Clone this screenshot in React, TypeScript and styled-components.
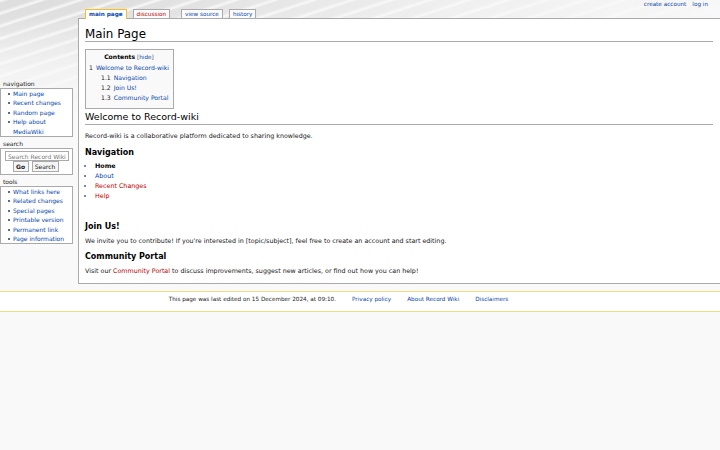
import React from "react";
import styled, { createGlobalStyle } from "styled-components";

const GlobalStyle = createGlobalStyle`
  html, body {
    margin: 0;
    padding: 0;
    background: #f9f9f9;
  }
  body {
    font-family: "DejaVu Sans", "Liberation Sans", sans-serif;
    color: #000;
  }
  a {
    text-decoration: none;
    color: #0645ad;
  }
`;

const Wrapper = styled.div`
  position: relative;
  isolation: isolate;
  width: 720px;
  min-height: 450px;
  overflow: hidden;

  /* the grey swoosh picture behind the top-left corner */
  &::before {
    content: "";
    position: absolute;
    left: 0;
    top: 0;
    width: 720px;
    height: 130px;
    z-index: -1;
    background-color: #e4e4e4;
    background-image: repeating-linear-gradient(
        -18deg,
        rgba(255, 255, 255, 0) 0px,
        rgba(255, 255, 255, 0) 7px,
        rgba(255, 255, 255, 0.75) 9px,
        rgba(255, 255, 255, 0) 12px
      ),
      linear-gradient(180deg, #dedede, #ececec);
    -webkit-mask-image: radial-gradient(ellipse 760px 115px at 0 0, #000 15%, rgba(0, 0, 0, 0.35) 60%, transparent 100%);
    mask-image: radial-gradient(ellipse 760px 115px at 0 0, #000 15%, rgba(0, 0, 0, 0.35) 60%, transparent 100%);
  }
`;

const PersonalBar = styled.ul`
  display: flex;
  justify-content: flex-end;
  gap: 6px;
  height: 9px;
  margin: 0;
  padding: 0 12px 0 0;
  list-style: none;
  font-size: 5.7px;
  line-height: 8px;
`;

const Layout = styled.div`
  display: grid;
  grid-template-columns: 78px 1fr;
  align-items: start;
`;

const Sidebar = styled.div`
  width: 73px;
  padding-top: 71px;
`;

const Portlet = styled.div`
  margin-bottom: 3px;
`;

const PortletLabel = styled.h3`
  margin: 0;
  padding: 0 3px;
  font-size: 6px;
  line-height: 8px;
  font-weight: normal;
  color: #222;
`;

const PortletBody = styled.div`
  background: #fff;
  border: 1px solid #aaa;
  padding: 0 2px 0 0;
`;

const PortletList = styled.ul`
  margin: 0;
  padding: 0 0 0 12px;
  list-style: none;
  font-size: 6px;
  line-height: 9.4px;

  li::before {
    content: "";
    display: inline-block;
    width: 2px;
    height: 2px;
    margin: 0 3px 0 -5px;
    vertical-align: 1px;
    background: #5a6a98;
  }
`;

const SearchForm = styled.form`
  display: flex;
  flex-direction: column;
  align-items: center;
  padding: 2px 0;
`;

const SearchInput = styled.input`
  box-sizing: border-box;
  width: 64px;
  height: 10px;
  margin: 0 0 0 4px;
  align-self: flex-start;
  padding: 0 2px;
  border: 1px solid #aaa;
  font-family: inherit;
  font-size: 6px;
  background: #fff;
  &::placeholder {
    color: #777;
  }
`;

const ButtonRow = styled.div`
  display: flex;
  gap: 3px;
`;

const SearchButton = styled.button<{ $bold?: boolean; $w: number }>`
  box-sizing: border-box;
  width: ${(p) => p.$w}px;
  height: 11px;
  padding: 0;
  border: 1px solid #aaa;
  background: #f5f5f5;
  font-family: inherit;
  font-size: 6px;
  line-height: 9px;
  font-weight: ${(p) => (p.$bold ? "bold" : "normal")};
  color: #222;
`;

const MainColumn = styled.div`
  display: flex;
  flex-direction: column;
`;

const Tabs = styled.ul`
  display: flex;
  align-items: flex-start;
  height: 10px;
  margin: 0 0 -1px 7px;
  padding: 0;
  list-style: none;
  font-size: 5.7px;
  position: relative;
  z-index: 1;
`;

const Tab = styled.li<{ $selected?: boolean; $gap: number }>`
  box-sizing: border-box;
  height: ${(p) => (p.$selected ? 10 : 9)}px;
  margin-right: ${(p) => p.$gap}px;
  padding: 0 3px;
  border: 1px solid ${(p) => (p.$selected ? "#fabd23" : "#aaa")};
  border-bottom: none;
  background: ${(p) => (p.$selected ? "#fff" : "#fbfbfb")};
  font-weight: ${(p) => (p.$selected ? "bold" : "normal")};
  line-height: 8px;
  white-space: nowrap;
`;

const TabLink = styled.a<{ $red?: boolean }>`
  color: ${(p) => (p.$red ? "#ba0000" : "#0645ad")};
`;

const Content = styled.div`
  background: #fff;
  border: 1px solid #aaa;
  border-right: none;
  padding: 0 7px 8px 6px;
  font-size: 6.35px;
  line-height: 9px;
  color: #202122;
`;

const Title = styled.h1`
  margin: 8px 0 0;
  padding: 0;
  border-bottom: 1px solid #aaa;
  font-size: 11.9px;
  line-height: 14px;
  font-weight: normal;
  color: #000;
`;

const Toc = styled.div`
  display: inline-block;
  margin-top: 7px;
  padding: 2px 4px 5px 3px;
  border: 1px solid #aaa;
  background: #f9f9f9;
  font-size: 6.1px;
  line-height: 10px;
`;

const TocTitle = styled.div`
  text-align: center;
  margin-bottom: 1px;

  b {
    color: #000;
  }
`;

const TocToggle = styled.span`
  font-size: 5.7px;
  color: #555;
`;

const TocItem = styled.div<{ $level: number }>`
  padding-left: ${(p) => (p.$level - 1) * 12}px;
  color: #202122;
`;

const TocNumber = styled.span`
  margin-right: 3px;
`;

const SectionTitle = styled.h2`
  margin: 1px 0 0;
  padding: 0;
  border-bottom: 1px solid #aaa;
  font-size: 9.5px;
  line-height: 14px;
  font-weight: normal;
  color: #000;
`;

const SubTitle = styled.h3<{ $top: number }>`
  margin: ${(p) => p.$top}px 0 0;
  font-size: 8px;
  line-height: 10px;
  font-weight: bold;
  color: #000;
`;

const Para = styled.p<{ $top: number }>`
  margin: ${(p) => p.$top}px 0 0;
`;

const BulletList = styled.ul`
  margin: 3px 0 0;
  padding-left: 10px;
  list-style: square;
  line-height: 10px;

  li::marker {
    color: #7a86b0;
  }
`;

const RedLink = styled.a`
  color: #ba0000;
`;

const SelfLink = styled.strong`
  color: #000;
`;

const Footer = styled.div`
  margin-top: 7px;
  padding: 3px 43px 8px 0;
  border-top: 1px solid #f1dc7e;
  border-bottom: 1px solid #f1dc7e;
  background: #fff;
`;

const FooterList = styled.ul`
  display: flex;
  justify-content: center;
  gap: 16px;
  margin: 0;
  padding: 0;
  list-style: none;
  font-size: 5.7px;
  line-height: 8px;
  color: #222;
`;

const navLinks = ["Main page", "Recent changes", "Random page", "Help about MediaWiki"];
const toolLinks = [
  "What links here",
  "Related changes",
  "Special pages",
  "Printable version",
  "Permanent link",
  "Page information",
];

export default function App() {
  return (
    <Wrapper>
      <GlobalStyle />
      <PersonalBar>
        <li>
          <a href="#">create account</a>
        </li>
        <li>
          <a href="#">log in</a>
        </li>
      </PersonalBar>
      <Layout>
        <Sidebar>
          <Portlet>
            <PortletLabel>navigation</PortletLabel>
            <PortletBody>
              <PortletList>
                {navLinks.map((l) => (
                  <li key={l}>
                    <a href="#">{l}</a>
                  </li>
                ))}
              </PortletList>
            </PortletBody>
          </Portlet>
          <Portlet>
            <PortletLabel>search</PortletLabel>
            <PortletBody>
              <SearchForm onSubmit={(e) => e.preventDefault()}>
                <SearchInput placeholder="Search Record Wiki" />
                <ButtonRow>
                  <SearchButton $bold $w={16}>
                    Go
                  </SearchButton>
                  <SearchButton $w={27}>Search</SearchButton>
                </ButtonRow>
              </SearchForm>
            </PortletBody>
          </Portlet>
          <Portlet>
            <PortletLabel>tools</PortletLabel>
            <PortletBody>
              <PortletList>
                {toolLinks.map((l) => (
                  <li key={l}>
                    <a href="#">{l}</a>
                  </li>
                ))}
              </PortletList>
            </PortletBody>
          </Portlet>
        </Sidebar>

        <MainColumn>
          <Tabs>
            <Tab $selected $gap={6}>
              <TabLink href="#">main page</TabLink>
            </Tab>
            <Tab $gap={11}>
              <TabLink $red href="#">
                discussion
              </TabLink>
            </Tab>
            <Tab $gap={6}>
              <TabLink href="#">view source</TabLink>
            </Tab>
            <Tab $gap={0}>
              <TabLink href="#">history</TabLink>
            </Tab>
          </Tabs>
          <Content>
            <Title>Main Page</Title>
            <Toc>
              <TocTitle>
                <b>Contents</b>{" "}
                <TocToggle>
                  [<a href="#">hide</a>]
                </TocToggle>
              </TocTitle>
              <TocItem $level={1}>
                <TocNumber>1</TocNumber>
                <a href="#">Welcome to Record-wiki</a>
              </TocItem>
              <TocItem $level={2}>
                <TocNumber>1.1</TocNumber>
                <a href="#">Navigation</a>
              </TocItem>
              <TocItem $level={2}>
                <TocNumber>1.2</TocNumber>
                <a href="#">Join Us!</a>
              </TocItem>
              <TocItem $level={2}>
                <TocNumber>1.3</TocNumber>
                <a href="#">Community Portal</a>
              </TocItem>
            </Toc>
            <SectionTitle>Welcome to Record-wiki</SectionTitle>
            <Para $top={6}>Record-wiki is a collaborative platform dedicated to sharing knowledge.</Para>
            <SubTitle $top={8}>Navigation</SubTitle>
            <BulletList>
              <li>
                <SelfLink>Home</SelfLink>
              </li>
              <li>
                <a href="#">About</a>
              </li>
              <li>
                <RedLink href="#">Recent Changes</RedLink>
              </li>
              <li>
                <RedLink href="#">Help</RedLink>
              </li>
            </BulletList>
            <SubTitle $top={21}>Join Us!</SubTitle>
            <Para $top={4}>
              We invite you to contribute! If you're interested in [topic/subject], feel free to create an
              account and start editing.
            </Para>
            <SubTitle $top={7}>Community Portal</SubTitle>
            <Para $top={4}>
              Visit our <RedLink href="#">Community Portal</RedLink> to discuss improvements, suggest new
              articles, or find out how you can help!
            </Para>
          </Content>
        </MainColumn>
      </Layout>
      <Footer>
        <FooterList>
          <li>This page was last edited on 15 December 2024, at 09:10.</li>
          <li>
            <a href="#">Privacy policy</a>
          </li>
          <li>
            <a href="#">About Record Wiki</a>
          </li>
          <li>
            <a href="#">Disclaimers</a>
          </li>
        </FooterList>
      </Footer>
    </Wrapper>
  );
}
